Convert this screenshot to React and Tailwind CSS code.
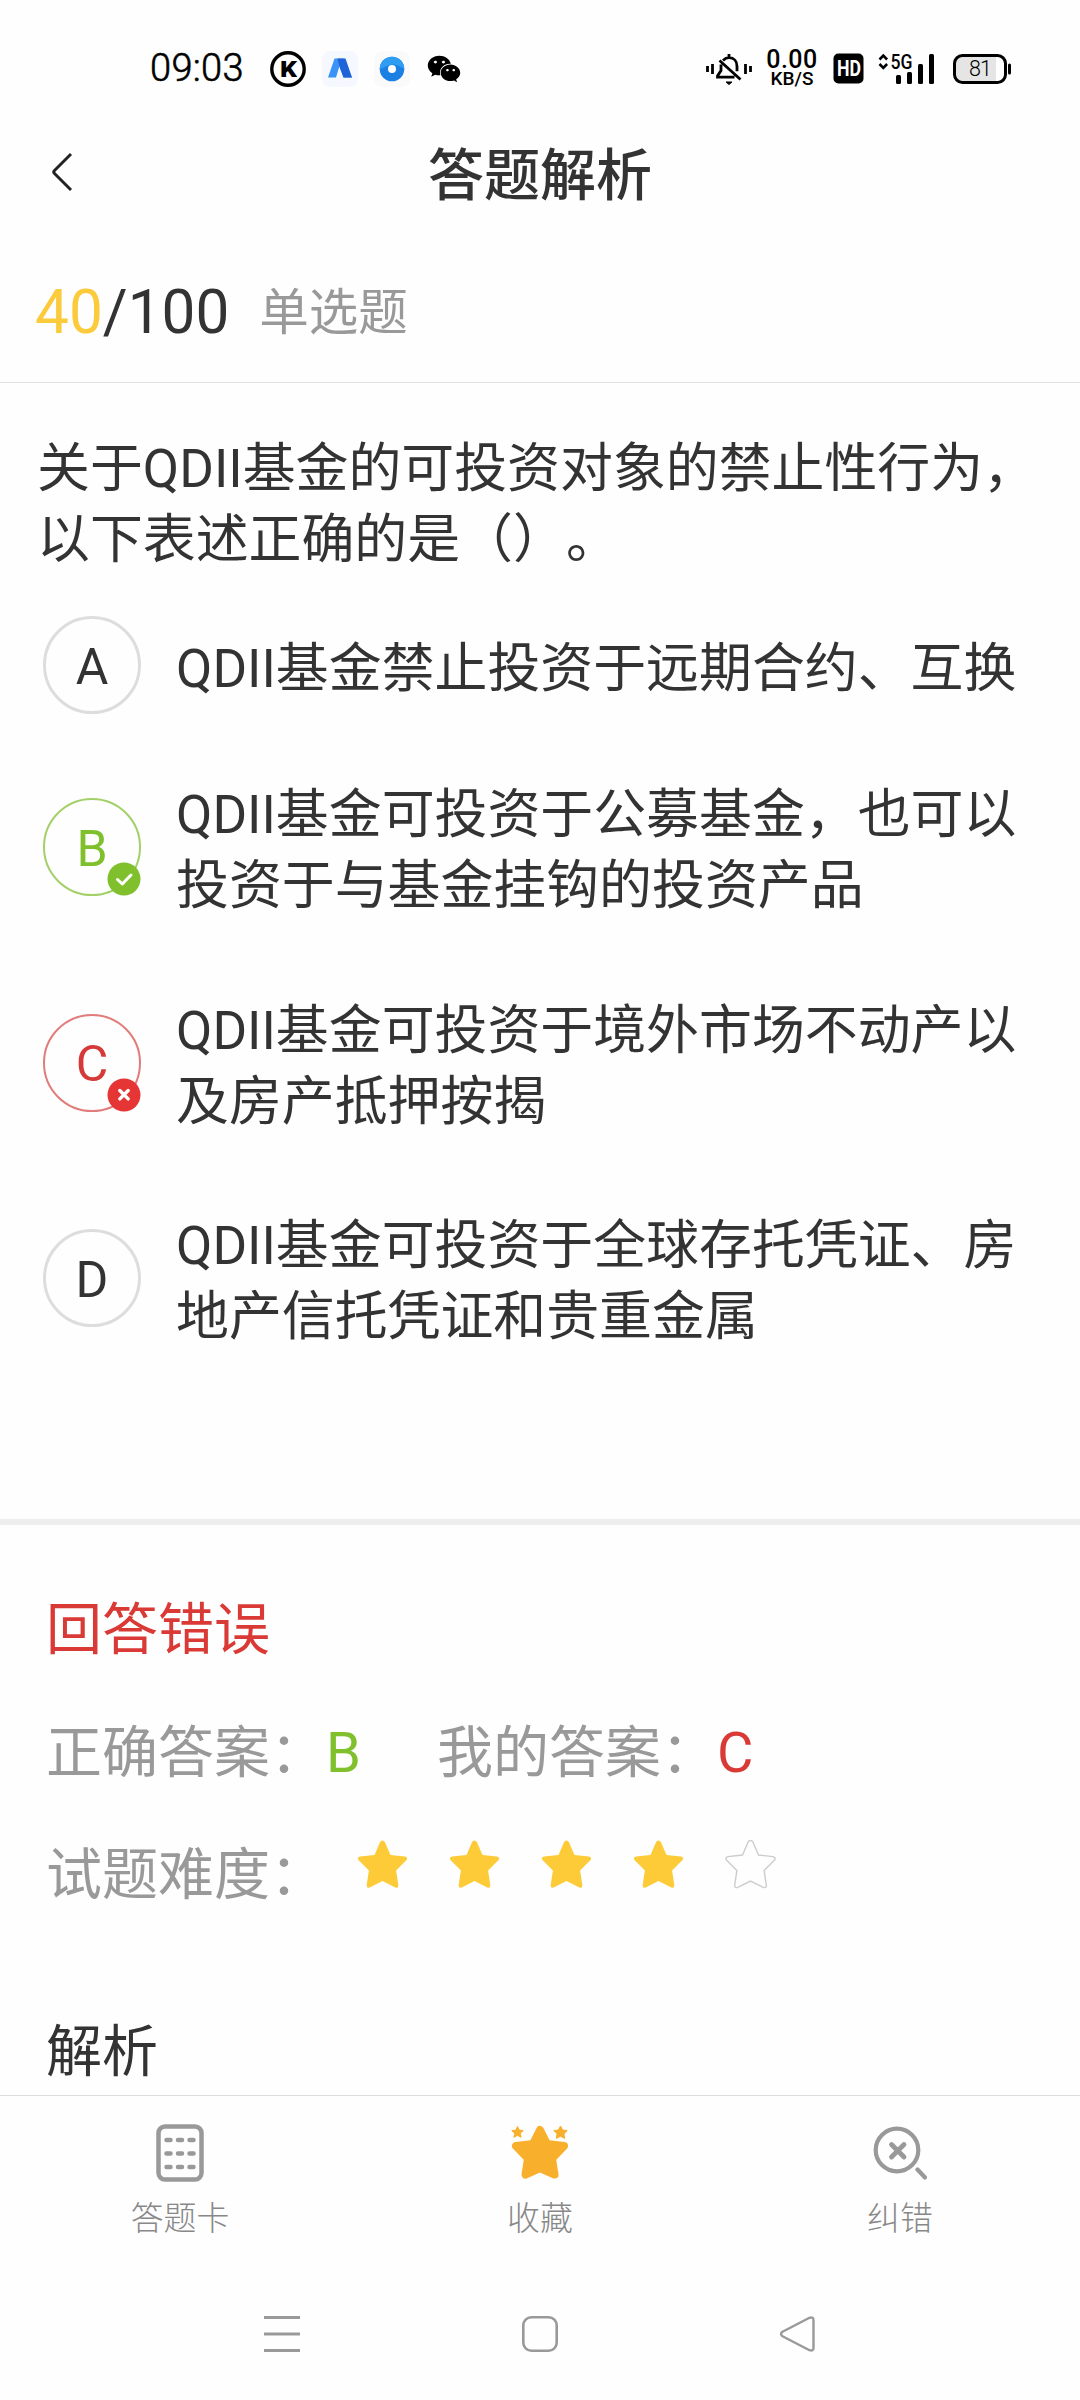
import { FaWeixin } from 'react-icons/fa'

const options = [
  { key: 'A', text: 'QDII基金禁止投资于远期合约、互换' },
  { key: 'B', text: 'QDII基金可投资于公募基金，也可以\n投资于与基金挂钩的投资产品', state: 'right' },
  { key: 'C', text: 'QDII基金可投资于境外市场不动产以\n及房产抵押按揭', state: 'wrong' },
  { key: 'D', text: 'QDII基金可投资于全球存托凭证、房\n地产信托凭证和贵重金属' },
]

const STAR = 'M25 1.5Q26.6 1.5 27.5 3.2L33 16L47.5 17.6Q51 18.6 48.8 21.2L38.6 31.4L40.8 46Q41 49.4 37.8 48.4L25 42L12.2 48.4Q9 49.4 9.2 46L11.4 31.4L1.2 21.2Q-1 18.6 2.5 17.6L17 16L22.5 3.2Q23.4 1.5 25 1.5Z'

function StatusBar() {
  return (
    <div className="flex h-[136px] items-start justify-between pl-[150px] pr-[68px] pt-[50px]">
      <div className="flex h-[37px] items-center">
        <span className="w-[120px] text-[38px] font-light leading-[37px] tracking-[0.3px] text-black [-webkit-text-stroke:0.6px_#000]">09:03</span>
        <svg width="36" height="36" viewBox="0 0 36 36">
          <circle cx="18" cy="18" r="16.2" fill="none" stroke="#000" strokeWidth="3.4" />
          <text x="10" y="26" fontSize="22" fontWeight="900" fontFamily="Roboto" textLength="17" lengthAdjust="spacingAndGlyphs">K</text>
        </svg>
        <svg className="ml-4" width="36" height="36" viewBox="0 0 36 36">
          <rect width="36" height="36" rx="8" fill="#f5f9ff" />
          <path d="M12.5 7.5h9L30 26.5h-8.500L17.500 15 14 26.500H6z" fill="#3b93f7" />
          <path d="M15.5 7.5h8L30 26.5h-8.5l-3.800-10z" fill="#1e63d8" />
        </svg>
        <svg className="ml-4" width="36" height="36" viewBox="0 0 36 36">
          <rect width="36" height="36" rx="8" fill="#fafafa" />
          <circle cx="18" cy="18" r="12.3" fill="#1c80e3" />
          <path d="M5.7 18a12.3 12.3 0 0 1 24.6 0c-4-3-9-5-13-4.5S10 17 5.7 18z" fill="#2f9df2" />
          <circle cx="18" cy="18" r="4" fill="#fff" />
        </svg>
        <FaWeixin className="ml-[17px] text-black" size={34} />
      </div>

      <div className="flex h-[37px] items-center">
        <svg width="46" height="34" viewBox="0 0 46 34" fill="none" stroke="#000" strokeWidth="2.8">
          <path d="M1.5 14v6M6.5 12v10M39.5 12v10M44.5 14v6" />
          <path d="M23 2v3M17 8.5c2-2 4-2.8 6-2.8 5 0 8 3.5 8 8.5v5M15 12.5v6l-3.5 5.5v1.2h17M13.5 8.5l21 19" />
          <path d="M20 30h6l-3 2.5z" fill="#000" strokeWidth="1" />
        </svg>
        <div className="ml-[13px] flex w-[54px] flex-col items-center font-medium text-black">
          <span className="text-[25px] leading-[20px] tracking-[0.5px]">0.00</span>
          <span className="text-[19px] leading-[18px]">KB/S</span>
        </div>
        <svg className="ml-[14px] overflow-visible" width="31" height="31" viewBox="0 0 31 31">
          <rect width="30" height="30" x=".5" y=".5" rx="5" />
          <text x="4" y="23" fontSize="21.5" fontWeight="700" fontFamily="Roboto" fill="#fff" textLength="24" lengthAdjust="spacingAndGlyphs">HD</text>
        </svg>
        <svg className="ml-[14px] overflow-visible" width="58" height="32" viewBox="0 0 58 32">
          <path d="M1.5 6.5l3.8-3.8 3.8 3.8M1.5 11l3.8 3.8L9.1 11" fill="none" stroke="#000" strokeWidth="2.6" />
          <text x="12.5" y="15.5" fontSize="19.5" fontWeight="500" fontFamily="Roboto" textLength="22" lengthAdjust="spacingAndGlyphs">5G</text>
          <rect x="18" y="22" width="5" height="9" rx="1.5" />
          <rect x="29" y="19" width="5" height="12" rx="1.5" />
          <rect x="40" y="11" width="5" height="20" rx="1.5" />
          <rect x="51" y="1" width="5" height="30" rx="1.5" />
        </svg>
        <svg className="ml-[16px]" width="60" height="32" viewBox="0 0 60 32">
          <path d="M10 4h34v24H10a6 6 0 0 1-6-6V10a6 6 0 0 1 6-6z" fill="#e5e5e5" />
          <rect x="2.5" y="2.5" width="51" height="27" rx="8" fill="none" stroke="#000" strokeWidth="3" />
          <rect x="56" y="10.5" width="3" height="11" rx="1.5" />
          <text x="17" y="23.3" fontSize="21.5" fontWeight="300" fontFamily="Roboto" fill="#000" textLength="23">81</text>
        </svg>
      </div>
    </div>
  )
}

function OptionBadge({ state }) {
  const right = state === 'right'
  return (
    <svg className="absolute -bottom-0.5 -right-0.5" width="34" height="34" viewBox="0 0 34 34">
      <circle cx="17" cy="17" r="16.5" fill={right ? '#80c02c' : '#e63535'} />
      {right ? (
        <path d="M10.5 17.5l4.8 4.5 8.7-9" fill="none" stroke="#fff" strokeWidth="3" strokeLinecap="round" strokeLinejoin="round" />
      ) : (
        <path d="M12.8 12.5l8.4 8.4M21.2 12.5l-8.4 8.4" stroke="#fff" strokeWidth="3.4" strokeLinecap="round" />
      )}
    </svg>
  )
}

const circleStyles = {
  right: 'border-2 border-[#a3d068] text-[#80c02c]',
  wrong: 'border-2 border-[#e07c7a] text-[#d53a38]',
  none: 'border-[3px] border-[#dddddd] text-[#333333]',
}

function Option({ option }) {
  return (
    <div className="flex items-center gap-[35px] pl-[43px]">
      <div className={`relative flex size-[98px] shrink-0 items-center justify-center rounded-full pt-[3px] text-[50px] leading-none ${circleStyles[option.state || 'none']}`}>
        <span>{option.key}</span>
        {option.state && <OptionBadge state={option.state} />}
      </div>
      <p className="-mb-1 mt-1 whitespace-pre text-[52.9px] leading-[71px]">{option.text}</p>
    </div>
  )
}

function Answer({ label, value, color }) {
  return (
    <div className="flex">
      <span className="w-[280px] text-[#999999]">{label}</span>
      <span className={color}>{value}</span>
    </div>
  )
}

function TabItem({ label, children }) {
  return (
    <div className="flex flex-1 flex-col items-center">
      <div className="flex h-[60px] items-center justify-center">{children}</div>
      <span className="mt-[13px] text-[32.9px] font-light leading-[46px] text-[#888888]">{label}</span>
    </div>
  )
}

function App() {
  return (
    <div className="flex h-[2400px] w-[1080px] flex-col overflow-hidden bg-[#fefefe] font-['Roboto','Noto_Sans_CJK_SC',sans-serif] text-[#333333] [text-spacing-trim:space-all]">
      <StatusBar />

      <header className="grid h-[80px] shrink-0 grid-cols-[1fr_auto_1fr] items-center">
        <svg className="mb-[8px] ml-[50px]" width="24" height="40" viewBox="0 0 24 40" fill="none" stroke="#222" strokeWidth="3">
          <path d="M21 2L4.5 18.5q-1.500 1.500 0 3L21 38" />
        </svg>
        <h1 className="text-[56px] font-medium leading-[80px]">答题解析</h1>
      </header>

      <div className="flex h-[167px] shrink-0 items-center border-b border-[#e0e0e0] pl-[35px] pt-[27px]">
        <span className="text-[60.3px] leading-[80px]"><span className="text-[#fbcb3c]">40</span>/100</span>
        <span className="ml-[30px] text-[49.5px] leading-[80px] text-[#999999]">单选题</span>
      </div>

      <p className="mt-[51px] whitespace-pre pl-[37px] text-[52.9px] leading-[71px]">
        {'关于QDII基金的可投资对象的禁止性行为，\n以下表述正确的是（）。'}
      </p>

      <div className="mt-[40px] flex flex-col gap-[62px]">
        <Option option={options[0]} />
        <div className="flex flex-col gap-[73.5px]">
          {options.slice(1).map((o) => <Option key={o.key} option={o} />)}
        </div>
      </div>

      <section className="mt-[170px] border-t-[6px] border-[#ededed] pl-[46px] pt-[65px] text-[56px] leading-[80px]">
        <p className="text-[#d93a36]">回答错误</p>
        <div className="mt-[43px] flex">
          <Answer label="正确答案：" value="B" color="text-[#80c02c]" />
          <div className="ml-[76px]"><Answer label="我的答案：" value="C" color="text-[#d93a36]" /></div>
        </div>
        <div className="mt-[42px] flex items-center">
          <span className="w-[311px] text-[#999999]">试题难度：</span>
          <div className="mb-[21px] flex gap-[41px]">
            {[1, 2, 3, 4, 5].map((n) => (
              <svg key={n} width="51" height="51" viewBox="-.5 0 51 51">
                <path d={STAR} fill={n < 5 ? '#fdcb37' : 'none'} stroke={n < 5 ? 'none' : '#cccccc'} strokeWidth="1.4" />
              </svg>
            ))}
          </div>
        </div>
        <h2 className="mt-[97px]">解析</h2>
      </section>

      <footer className="mt-auto h-[305px] shrink-0 border-t border-[#dddddd] bg-[#fefefe]">
        <div className="flex pt-[27px]">
          <TabItem label="答题卡">
            <svg width="48" height="58" viewBox="0 0 48 58" fill="none" stroke="#999" strokeLinecap="round">
              <rect x="2.5" y="2.5" width="43" height="53" rx="6.5" strokeWidth="4.5" />
              <path d="M10.5 16h4M22 16h4M33.5 16h4M10.5 29.5h4M22 29.5h4M33.5 29.5h4M10.5 43h4M22 43h4M33.5 43h4" strokeWidth="4.5" />
            </svg>
          </TabItem>
          <TabItem label="收藏">
            <svg width="58" height="56" viewBox="0 0 58 56" fill="#f8b02c" stroke="#f8b02c" strokeLinejoin="round">
              <path d="M29 5l7 14 17 2-12 12.5 2.5 16L29 43 14.5 49.5l2.5-16L5 21l17-2z" strokeWidth="8" />
              <path d="M6.5 1.5l1.7 3.6 4 .5-2.9 2.7.8 4-3.6-2-3.6 2 .8-4L.8 5.6l4-.5z" strokeWidth="1" />
              <path d="M49.5 1l2.1 4 4.6.6-3.3 3.2.8 4.6-4.2-2.2-4.2 2.2.8-4.6-3.3-3.2 4.6-.6z" strokeWidth="1" />
            </svg>
          </TabItem>
          <TabItem label="纠错">
            <svg width="54" height="54" viewBox="0 0 54 54" fill="none" stroke="#999" strokeLinecap="round">
              <circle cx="24" cy="24" r="21.3" strokeWidth="4.2" />
              <path d="M18.5 18.5l12.5 12.5M31 18.5L18.5 31" strokeWidth="4.8" />
              <path d="M44.5 43.5l7.5 8" strokeWidth="4.2" />
            </svg>
          </TabItem>
        </div>

        <div className="mt-[74px] flex h-[36px] items-center justify-between px-[264px]">
          <svg width="36" height="36" viewBox="0 0 36 36" stroke="#999" strokeWidth="3">
            <path d="M0 1.5h36M0 18h36M0 34.5h36" />
          </svg>
          <svg width="36" height="36" viewBox="0 0 36 36" fill="none" stroke="#999" strokeWidth="2.6">
            <rect x="1.3" y="1.3" width="33.4" height="33.4" rx="8" />
          </svg>
          <svg width="36" height="36" viewBox="0 0 36 36" fill="none" stroke="#999" strokeWidth="2.4" strokeLinejoin="round">
            <path d="M2.5 15.7L29.5 1.8q4-1.3 4 2.2v28q0 3.5-4 2.2L2.5 20.3q-3-2.3 0-4.6z" />
          </svg>
        </div>
      </footer>
    </div>
  )
}

export default App
